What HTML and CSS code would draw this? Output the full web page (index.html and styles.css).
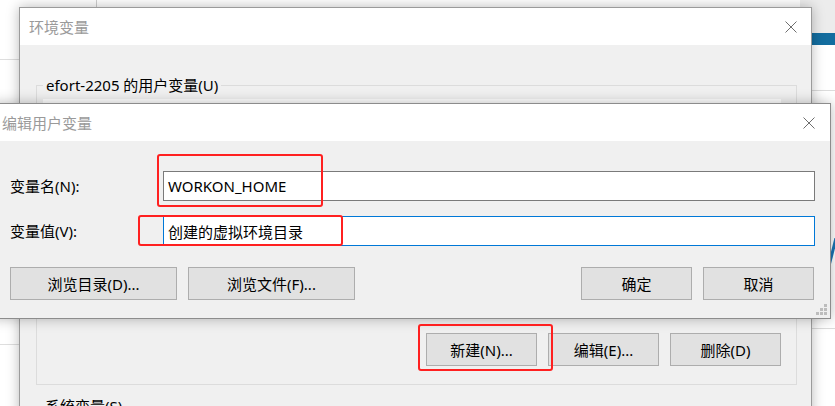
FILE: index.html
```html
<!DOCTYPE html>
<html lang="zh-CN">
<head>
  <meta charset="UTF-8">
  <title>编辑用户变量</title>
  <link rel="stylesheet" href="styles.css">
</head>
<body>
  <div class="desktop">
    <!-- windows behind, only edges visible -->
    <div class="behind-left">
      <div class="rule rule-top"></div>
      <div class="rule rule-bottom"></div>
    </div>
    <div class="behind-right">
      <div class="behind-head"></div>
      <div class="behind-band"></div>
      <div class="behind-rows"></div>
      <svg class="behind-stroke" width="10" height="30" viewBox="0 0 10 30"><path d="M9 0 L2 28" stroke="#1b74b4" stroke-width="3" fill="none"/></svg>
    </div>

    <section class="dialog env-dialog">
      <header class="titlebar">
        <span class="title">环境变量</span>
        <svg class="close" width="12" height="12" viewBox="0 0 12 12"><path d="M0.5 0.5 L11.5 11.5 M11.5 0.5 L0.5 11.5" stroke="#6e6e6e" stroke-width="1" fill="none"/></svg>
      </header>
      <div class="dialog-body">
        <fieldset class="group">
          <legend>efort-2205 的用户变量(U)</legend>
          <div class="var-list"></div>
          <div class="btn-row">
            <button class="btn btn-small">新建(N)...</button>
            <button class="btn btn-small">编辑(E)...</button>
            <button class="btn btn-small">删除(D)</button>
          </div>
        </fieldset>
        <div class="group-label">系统变量(S)</div>
      </div>
    </section>

    <section class="dialog edit-dialog">
      <header class="titlebar">
        <span class="title">编辑用户变量</span>
        <svg class="close" width="12" height="12" viewBox="0 0 12 12"><path d="M0.5 0.5 L11.5 11.5 M11.5 0.5 L0.5 11.5" stroke="#6e6e6e" stroke-width="1" fill="none"/></svg>
      </header>
      <div class="dialog-body edit-body">
        <div class="form">
          <label class="field-label">变量名(N):</label>
          <div class="field">WORKON_HOME</div>
          <label class="field-label">变量值(V):</label>
          <div class="field field-focus">创建的虚拟环境目录</div>
        </div>
        <div class="edit-actions">
          <div class="btn-group">
            <button class="btn btn-wide">浏览目录(D)...</button>
            <button class="btn btn-wide">浏览文件(F)...</button>
          </div>
          <div class="btn-group">
            <button class="btn btn-small">确定</button>
            <button class="btn btn-small">取消</button>
          </div>
        </div>
        <svg class="grip" width="12" height="12" viewBox="0 0 12 12" fill="#bdbdbd">
          <rect x="8" y="0" width="3" height="3"/>
          <rect x="4" y="4" width="3" height="3"/><rect x="8" y="4" width="3" height="3"/>
          <rect x="0" y="8" width="3" height="3"/><rect x="4" y="8" width="3" height="3"/><rect x="8" y="8" width="3" height="3"/>
        </svg>
      </div>
    </section>

    <!-- red annotation boxes -->
    <div class="mark mark-name"></div>
    <div class="mark mark-value"></div>
    <div class="mark mark-new"></div>
  </div>
</body>
</html>
```

FILE: styles.css
```css
:root {
  --face: #f0f0f0;
  --btn-bg: #e1e1e1;
  --btn-border: #adadad;
  --title-grey: #9a9a9a;
  --mark-red: #ff2020;
  --font: "Noto Sans", "Noto Sans CJK SC", "Liberation Sans", sans-serif;
}

* { box-sizing: border-box; }

body {
  margin: 0;
  background: #fff;
  font-family: var(--font);
  font-size: 15px;
  color: #000;
  overflow: hidden;
}

.desktop {
  position: relative;
  width: 835px;
  height: 406px;
  overflow: hidden;
  background: #fff;
}

/* background windows */
.behind-left {
  position: absolute;
  left: 0;
  top: 0;
  width: 120px;
  height: 406px;
}

.rule {
  position: absolute;
  left: 0;
  width: 30px;
  height: 1px;
  background: #dedede;
}

.rule-top { top: 59px; }
.rule-bottom { top: 344px; }

.behind-left::after {
  content: "";
  position: absolute;
  left: 96px;
  top: 0;
  width: 1px;
  height: 10px;
  background: #cfcfcf;
}

.behind-right {
  position: absolute;
  left: 800px;
  top: 0;
  width: 35px;
  height: 406px;
  display: flex;
  flex-direction: column;
}

.behind-head {
  height: 33px;
  background: #ececec;
}

.behind-band {
  height: 12px;
  background: #136d9f;
}

.behind-rows {
  flex: 1;
  background:
    linear-gradient(#dcdcdc, #dcdcdc) 0 45px / 100% 1px no-repeat,
    linear-gradient(#dcdcdc, #dcdcdc) 0 283px / 100% 1px no-repeat,
    #fff;
}

.behind-stroke {
  position: absolute;
  left: 27px;
  top: 238px;
}

/* dialogs */
.dialog {
  position: absolute;
  display: flex;
  flex-direction: column;
  background: var(--face);
  border: 1px solid #9b9b9b;
  box-shadow: 0 0 12px rgba(0, 0, 0, 0.28);
}

.env-dialog {
  left: 19px;
  top: 7px;
  width: 793px;
  height: 440px;
}

.edit-dialog {
  left: -8px;
  top: 103px;
  width: 839px;
  height: 216px;
  border-color: #8c8c8c;
}

.titlebar {
  height: 37px;
  flex: none;
  display: flex;
  align-items: center;
  justify-content: space-between;
  padding: 0 14px 0 9px;
  background: #fff;
}

.edit-dialog .titlebar { padding-right: 15px; }

.title {
  color: var(--title-grey);
  font-size: 15px;
  line-height: 20px;
}

.dialog-body {
  flex: 1;
  position: relative;
  background: var(--face);
}

/* environment dialog */
.env-dialog .dialog-body { padding-top: 30px; }

.group {
  margin: 0 14px 0 16px;
  padding: 0 15px 18px 6px;
  border: 1px solid #dcdcdc;
  min-width: 0;
}

.group legend {
  padding: 0 3px;
  line-height: 20px;
}

.var-list {
  height: 212px;
  margin: 4px 0 22px;
  background: #fff;
}

.btn-row {
  display: flex;
  justify-content: flex-end;
  gap: 11px;
}

.group-label {
  margin: 11px 0 0 25px;
  line-height: 20px;
}

/* buttons */
.btn {
  height: 33px;
  padding: 0;
  background: var(--btn-bg);
  border: 1px solid var(--btn-border);
  font-family: var(--font);
  font-size: 15px;
  color: #000;
}

.btn-small { width: 111px; }
.btn-wide { width: 167px; }

/* edit dialog */
.edit-body { padding: 30px 15px 0 17px; }

.form {
  display: grid;
  grid-template-columns: 153px 1fr;
  grid-auto-rows: 30px;
  row-gap: 15px;
  align-items: center;
}

.field-label { line-height: 20px; }

.field {
  height: 30px;
  padding: 0 4px;
  display: flex;
  align-items: center;
  background: #fff;
  border: 1px solid #7a7a7a;
}

.field-focus { border-color: #0078d7; }

.edit-actions {
  display: flex;
  justify-content: space-between;
  margin-top: 21px;
  padding-right: 1px;
}

.btn-group {
  display: flex;
  gap: 11px;
}

.grip {
  position: absolute;
  right: 2px;
  bottom: 2px;
}

/* annotations */
.mark {
  position: absolute;
  border: 2.5px solid var(--mark-red);
  border-radius: 3px;
}

.mark-name { left: 157px; top: 154px; width: 166px; height: 53px; }
.mark-value { left: 138px; top: 215px; width: 205px; height: 31px; }
.mark-new { left: 418px; top: 324px; width: 135px; height: 47px; }
```
